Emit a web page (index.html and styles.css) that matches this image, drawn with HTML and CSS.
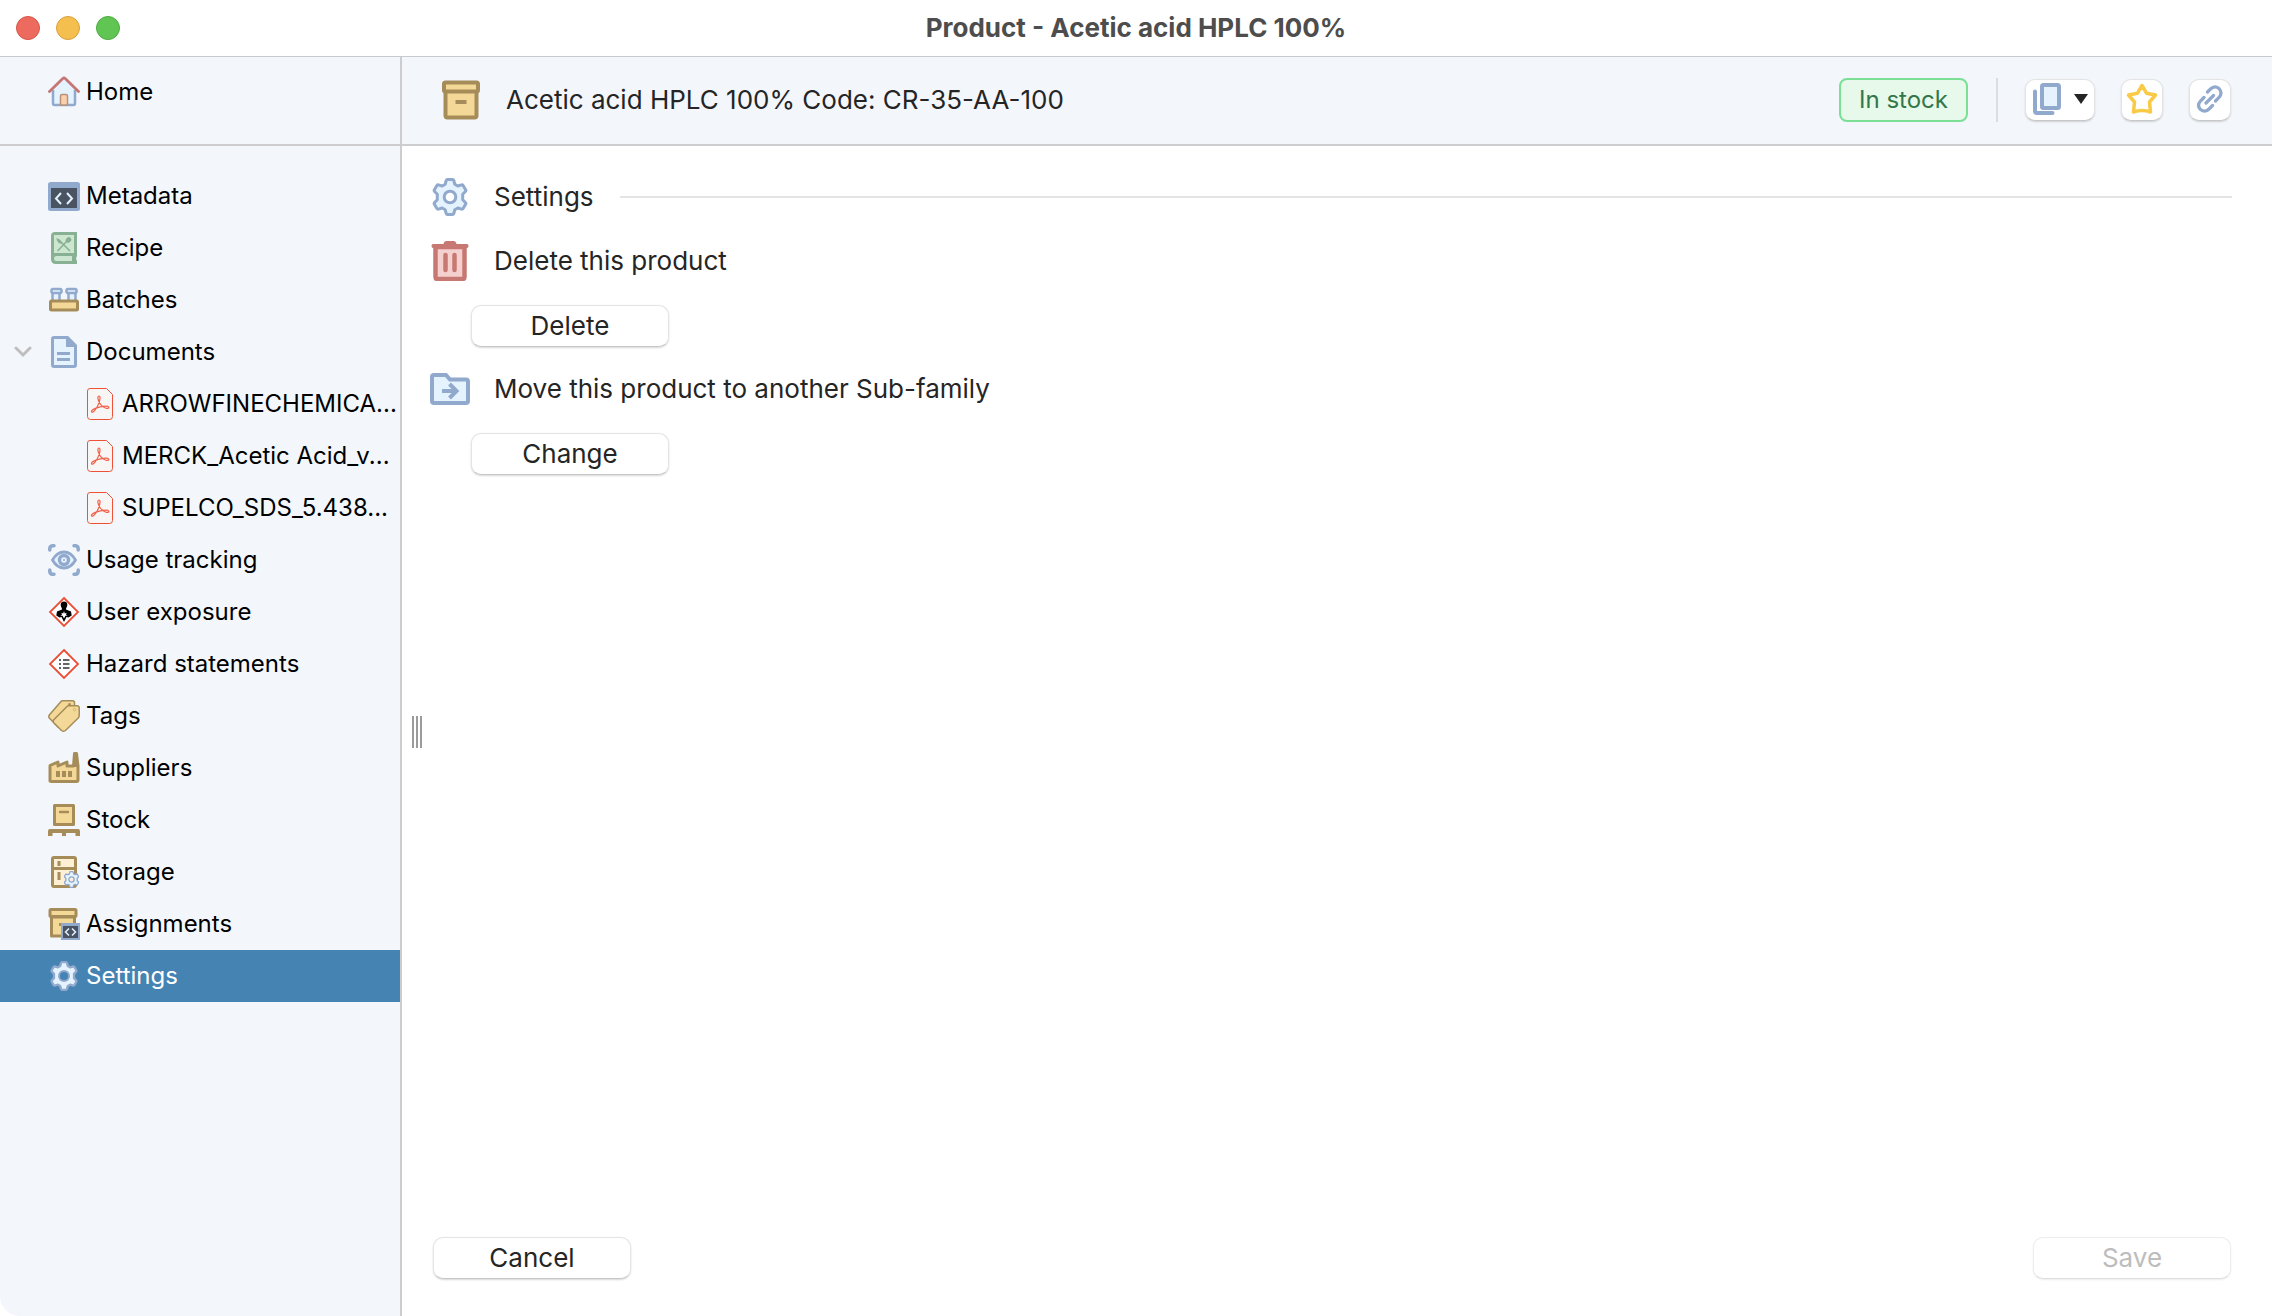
FILE: index.html
```html
<!DOCTYPE html>
<html lang="en">
<head>
  <meta charset="UTF-8">
  <meta name="viewport" content="width=device-width, initial-scale=1.0">
  <title>Product - Acetic acid HPLC 100%</title>
  <link rel="stylesheet" href="styles.css">
</head>
<body>

  <!-- icons used more than once -->
  <svg class="sprite" aria-hidden="true">
    <symbol id="pdf" viewBox="0 0 26 32">
      <path d="M3 .5h16.500l6 6V28.500a3 3 0 0 1-3 3H3.500a3 3 0 0 1-3-3V3A2.500 2.500 0 0 1 3 .5z" fill="#f8f6f5" stroke="#ee5138"/>
      <path d="M12 8c-1.500 0-1.300 2.500-.5 4.600 1.200 3.200 4 6.400 7.500 7.600 2 .6 3.200-.1 2.800-1-.6-1.200-4.300-1.200-8.300-.3-3.500.8-7.500 2.300-8.700 3.800-.8 1 .1 2 1.300 1.200 2.300-1.500 5.100-6.700 6.300-10.500C13.100 10.700 13.500 8 12 8z" fill="none" stroke="#f0604a" stroke-width="1.200"/>
    </symbol>
    <symbol id="gear" viewBox="0 0 36 38">
      <path d="M15.500 1.500h5q1 0 1.300 1l1 3.800 3 1.700 3.700-1.100q1-.3 1.600.6l2.500 4.200q.6 1-.2 1.800l-2.700 2.700v5.600l2.700 2.700q.8.800.2 1.800l-2.500 4.200q-.6.900-1.600.6L25.800 30l-3 1.700-1 3.800q-.3 1-1.300 1h-5q-1 0-1.300-1l-1-3.800-3-1.700-3.700 1.100q-1 .3-1.600-.6l-2.500-4.200q-.6-1 .2-1.800l2.700-2.700v-5.600l-2.700-2.700q-.8-.8-.2-1.800l2.500-4.200q.6-.9 1.600-.6L10.200 8l3-1.700 1-3.800q.3-1 1.300-1z M18 13.200a5.800 5.800 0 1 0 0 11.600a5.800 5.800 0 1 0 0-11.600z" fill="#e4f3fe" fill-rule="evenodd" stroke="#91a9cd" stroke-width="3" stroke-linejoin="round"/>
    </symbol>
  </svg>

  <header class="titlebar">
    <div class="lights">
      <span class="light red"></span>
      <span class="light yellow"></span>
      <span class="light green"></span>
    </div>
    <h1>Product - Acetic acid HPLC 100%</h1>
  </header>

  <div class="window">
    <nav class="sidebar">
      <div class="home">
        <a class="row" href="#">
          <svg class="icon" viewBox="0 0 32 32">
            <path d="M5 12L16 3l11 9v15a2 2 0 0 1-2 2H7a2 2 0 0 1-2-2z" fill="#e4f3fe"/>
            <path d="M5 14v13.500q0 1.500 1.500 1.500h19q1.500 0 1.500-1.500V14" fill="none" stroke="#91a9cd" stroke-width="2.500"/>
            <path d="M12.500 29V20q0-1.500 1.500-1.500h4q1.500 0 1.500 1.500v9z" fill="#fbd0ad" stroke="#b69279" stroke-width="1.500"/>
            <path d="M1.500 15.500L14.500 2.700q1.500-1.300 3 0l13 12.800" fill="none" stroke="#c47774" stroke-width="2.800" stroke-linecap="round"/>
          </svg>
          <span>Home</span>
        </a>
      </div>

      <div class="menu">
        <a class="row" href="#">
          <svg class="icon" viewBox="0 0 32 32">
            <rect y="2" width="32" height="29" rx="2.500" fill="#91a9cd"/>
            <rect x="3" y="8" width="26" height="20" fill="#4a5361"/>
            <path d="M13 13l-5 5.500 5 5.500M19 13l5 5.500-5 5.500" fill="none" stroke="#e4f3fe" stroke-width="2"/>
          </svg>
          <span>Metadata</span>
        </a>
        <a class="row" href="#">
          <svg class="icon" viewBox="0 0 32 32">
            <path d="M7 0h22v24q-1.600 2.500 0 5v3H8q-5 0-5-5V4q0-4 4-4z" fill="#88b093"/>
            <path d="M6 3h20v18H6zM8.500 24H24v5H8.500q-2.500 0-2.500-2.500T8.500 24z" fill="#cde6cf"/>
            <path d="M9.500 19L20 8M22 19L11 8" stroke="#88b093" stroke-width="1.500"/>
            <ellipse cx="20.500" cy="8" rx="3" ry="2.500" transform="rotate(-45 20.500 8)" fill="#88b093"/>
            <path d="M8.500 6q5 1.500 5 6-5-1-5-6z" fill="#88b093"/>
          </svg>
          <span>Recipe</span>
        </a>
        <a class="row" href="#">
          <svg class="icon" viewBox="0 0 32 32">
            <path d="M4.500 8.500h7V19h-7zM20.500 8.500h7V19h-7z" fill="#e4f3fe" stroke="#91a9cd" stroke-width="2.500"/>
            <rect x="3.500" y="5" width="10" height="4" rx="1.500" fill="#e4f3fe" stroke="#91a9cd" stroke-width="2.500"/>
            <rect x="18.500" y="5" width="10" height="4" rx="1.500" fill="#e4f3fe" stroke="#91a9cd" stroke-width="2.500"/>
            <rect x="2.500" y="17" width="27" height="9" rx="1" fill="#f4d898" stroke="#a58c58" stroke-width="3"/>
          </svg>
          <span>Batches</span>
        </a>
        <a class="row" href="#">
          <svg class="chevron" viewBox="0 0 18 12"><path d="M2 2l7 7 7-7" fill="none" stroke="#bebebe" stroke-width="3" stroke-linecap="round"/></svg>
          <svg class="icon" viewBox="0 0 32 32">
            <path d="M6 1.500h13.500l8 8V29q0 1.500-1.500 1.500H6q-1.500 0-1.500-1.500V3q0-1.500 1.500-1.500z" fill="#e4f3fe" stroke="#91a9cd" stroke-width="3"/>
            <path d="M18 2h3l7 7v2H18zM9 16h13v3H9zM9 22h13v3H9z" fill="#91a9cd"/>
          </svg>
          <span>Documents</span>
        </a>
        <a class="row file" href="#">
          <svg class="pdf"><use href="#pdf"/></svg>
          <span>ARROWFINECHEMICA...</span>
        </a>
        <a class="row file" href="#">
          <svg class="pdf"><use href="#pdf"/></svg>
          <span>MERCK_Acetic Acid_v...</span>
        </a>
        <a class="row file" href="#">
          <svg class="pdf"><use href="#pdf"/></svg>
          <span>SUPELCO_SDS_5.438...</span>
        </a>
        <a class="row" href="#">
          <svg class="icon" viewBox="0 0 32 32">
            <path d="M1.800 6V4.500Q2 2 4.500 1.800H6M26 1.800h1.500q2.500.2 2.700 2.700V6M30.200 26v1.500q-.2 2.500-2.700 2.700H26M6 30.200H4.500Q2 30 1.800 27.500V26" fill="none" stroke="#91a9cd" stroke-width="3.500" stroke-linecap="round"/>
            <path d="M4.500 16Q9 8 16 8t11.500 8Q23 24 16 24T4.500 16z" fill="#e4f3fe" stroke="#91a9cd" stroke-width="2.800"/>
            <circle cx="16" cy="16" r="4.500" fill="#e4f3fe" stroke="#91a9cd" stroke-width="3.400"/>
            <circle cx="16" cy="16" r="1" fill="#91a9cd"/>
          </svg>
          <span>Usage tracking</span>
        </a>
        <a class="row" href="#">
          <svg class="icon" viewBox="0 0 32 32">
            <path d="M16 2l14 14-14 14L2 16z" fill="#fff" stroke="#ea4f37" stroke-width="1.800"/>
            <path d="M16 5.500a3.300 3.300 0 0 1 3.300 3.500c0 2-1.300 2.800-1.300 4.500l5 2 .7 4-3.200 2-2-.5-2.500 5-2.500-5-2 .5-3.200-2 .7-4 5-2c0-1.700-1.300-2.500-1.300-4.500A3.300 3.300 0 0 1 16 5.500z"/>
            <path d="M16 15l.8 2.400 2-.7-.9 1.800 1.700 1-2.200.3L16 22.500l-1.400-2.700-2.200-.3 1.700-1-.9-1.800 2 .7z" fill="#fff"/>
          </svg>
          <span>User exposure</span>
        </a>
        <a class="row" href="#">
          <svg class="icon" viewBox="0 0 32 32">
            <path d="M16 2l14 14-14 14L2 16z" fill="#fff" stroke="#ea4f37" stroke-width="1.800"/>
            <path d="M11 12h2M15 12h6.500M11 16h2M15 16h6.500M11 20h2M15 20h6.500" stroke="#333" stroke-width="1.500"/>
          </svg>
          <span>Hazard statements</span>
        </a>
        <a class="row" href="#">
          <svg class="icon" viewBox="0 0 32 32">
            <path d="M14.500.8h10q2 0 2 2V10L10 27 1.300 18q-1-1.500 0-3L13 1.500q.5-.7 1.500-.7z" fill="#f4d898" stroke="#a58c58" stroke-width="1.500"/>
            <path d="M20.500 5.800h8.500q2.200 0 2.200 2.200v7.500q0 1.500-1 2.500L17.500 30.500q-2 1.500-4 0L6 23q-1.500-2 0-3.500L19 6.500q.7-.7 1.500-.7z" fill="#f4d898" stroke="#a58c58" stroke-width="1.500"/>
            <circle cx="21.500" cy="4.200" r="1.300" fill="#a58c58"/>
            <circle cx="26.500" cy="9.500" r="1.300" fill="none" stroke="#d5b878"/>
          </svg>
          <span>Tags</span>
        </a>
        <a class="row" href="#">
          <svg class="icon" viewBox="0 0 32 32">
            <path d="M2 29V13.500L10 10v4l9-4v4h6.500L26.500 1.500h2L30 14v14q0 1.500-1.500 1.500h-25Q2 29.500 2 28z" fill="#f4d898" stroke="#a58c58" stroke-width="3" stroke-linejoin="round"/>
            <path d="M26 1h3l1.500 14H25zM8 19h4v6H8zM14 19h4v6h-4zM20 19h4v6h-4z" fill="#a58c58"/>
          </svg>
          <span>Suppliers</span>
        </a>
        <a class="row" href="#">
          <svg class="icon" viewBox="0 0 32 32">
            <rect x="6.500" y="1.500" width="19" height="19" fill="#f4d898" stroke="#a58c58" stroke-width="3" stroke-linejoin="round"/>
            <path d="M12 8h8" stroke="#a58c58" stroke-width="2.500" stroke-linecap="round"/>
            <path d="M2 25h28q2 0 2 2v5h-4.500v-3H18v3h-4v-3H4.500v3H0v-5q0-2 2-2z" fill="#a58c58"/>
          </svg>
          <span>Stock</span>
        </a>
        <a class="row" href="#">
          <svg class="icon" viewBox="0 0 32 32">
            <rect x="4.500" y="1.500" width="23" height="29" rx="1.500" fill="#fdf0d5" stroke="#a58c58" stroke-width="3"/>
            <path d="M4 11h24v3H4zM9.500 5h3v5h-3zM9.500 16h3v8h-3z" fill="#a58c58"/>
            <svg x="15" y="15" width="17" height="17" viewBox="0 0 36 38"><use href="#gear"/></svg>
          </svg>
          <span>Storage</span>
        </a>
        <a class="row" href="#">
          <svg class="icon" viewBox="0 0 32 32">
            <path d="M3.500 9h23v19h-23z" fill="#f4d898" stroke="#a58c58" stroke-width="3" stroke-linejoin="round"/>
            <rect x="2" y="1.500" width="26" height="7" rx="1" fill="#f4d898" stroke="#a58c58" stroke-width="3"/>
            <path d="M11 15h6v3h-6z" fill="#a58c58"/>
            <path d="M13 15h19v17H13z" fill="#91a9cd"/>
            <path d="M15 18h15v12H15z" fill="#4a5361"/>
            <path d="M21 20.500L17.500 24l3.500 3.500M24 20.500l3.500 3.500-3.500 3.500" fill="none" stroke="#e4f3fe" stroke-width="1.500"/>
          </svg>
          <span>Assignments</span>
        </a>
        <a class="row active" href="#">
          <svg class="icon" viewBox="0 0 32 32">
            <svg x="1" y="1" width="30" height="30" viewBox="0 0 36 38"><use href="#gear"/></svg>
            <circle cx="16" cy="16" r="8" fill="#e4f3fe"/>
            <circle cx="16" cy="16" r="5" fill="#4583b3" stroke="#91a9cd" stroke-width="2"/>
          </svg>
          <span>Settings</span>
        </a>
      </div>
    </nav>

    <main>
      <div class="toolbar">
        <svg class="box" viewBox="0 0 40 40">
          <path d="M4.500 11h31v24.500q0 2-2 2h-27q-2 0-2-2z" fill="#f4d898" stroke="#a58c58" stroke-width="4"/>
          <rect x="3" y="2.500" width="34" height="9" rx="1.500" fill="#f4d898" stroke="#a58c58" stroke-width="4"/>
          <path d="M14.500 20h11v4h-11z" fill="#a58c58"/>
        </svg>
        <h2>Acetic acid HPLC 100% Code: CR-35-AA-100</h2>
        <span class="badge">In stock</span>
        <span class="divider"></span>
        <button class="tool wide" type="button" aria-label="Copy">
          <svg width="28" height="34" viewBox="0 0 28 34">
            <rect x="9" y="3" width="17" height="23" rx="1.500" fill="#e4f3fe" stroke="#91a9cd" stroke-width="4"/>
            <path d="M2 9.500V29q0 2 2 2h15.500" fill="none" stroke="#91a9cd" stroke-width="4" stroke-linecap="round"/>
          </svg>
          <svg width="14" height="10" viewBox="0 0 14 10"><path d="M0 0h14L7 10z" fill="#252525"/></svg>
        </button>
        <button class="tool" type="button" aria-label="Favorite">
          <svg width="32" height="32" viewBox="0 0 32 32">
            <path d="M16 2.500l4.500 7.700 9 1.800-6 7 1 10q-8.500-3-17 0l1-10-6-7 9-1.800z" fill="none" stroke="#f8ca45" stroke-width="3.500" stroke-linejoin="round"/>
          </svg>
        </button>
        <button class="tool" type="button" aria-label="Link">
          <svg width="28" height="28" viewBox="0 0 28 28">
            <path d="M11.500 7l3-3q4-4 8.500-.5 4 4.500 0 9l-3.500 3.500M8 12.500L4.500 16q-4 4.500 0 8.500 4.500 3.500 8.500-.5l3.500-3.500M10 18l7.500-7.500" fill="none" stroke="#91a9cd" stroke-width="3.200" stroke-linecap="round"/>
          </svg>
        </button>
      </div>

      <div class="content">
        <div class="splitter"><i></i><i></i><i></i></div>

        <section class="settings">
          <div class="heading">
            <svg class="big-icon" viewBox="0 0 40 40"><use href="#gear" x="2" width="36" height="40"/></svg>
            <h3>Settings</h3>
            <hr>
          </div>

          <div class="heading">
            <svg class="big-icon" viewBox="0 0 40 40">
              <path d="M5.500 6h29v30q0 2-2 2h-25q-2 0-2-2z" fill="#f4d1cf" stroke="#c77872" stroke-width="4.500"/>
              <path d="M3 3h10.500q.5-3 3-3h7q2.500 0 3 3H37q1.500 0 1.500 2t-1.500 2H3Q1.500 7 1.500 5T3 3z" fill="#c77872"/>
              <path d="M15.500 14v15M24.500 14v15" stroke="#c77872" stroke-width="4.500" stroke-linecap="round"/>
            </svg>
            <h3>Delete this product</h3>
          </div>
          <button class="btn action" type="button">Delete</button>

          <div class="heading">
            <svg class="big-icon" viewBox="0 0 40 40">
              <path d="M4 6h12l4 4.500h16q2 0 2 2V32q0 2-2 2H4q-2 0-2-2V8q0-2 2-2z" fill="#e4f3fe" stroke="#91a9cd" stroke-width="4"/>
              <path d="M12 22h14M19.500 15l7 7-7 7" fill="none" stroke="#91a9cd" stroke-width="4"/>
            </svg>
            <h3>Move this product to another Sub-family</h3>
          </div>
          <button class="btn action" type="button">Change</button>

          <div class="footer">
            <button class="btn" type="button">Cancel</button>
            <button class="btn" type="button" disabled>Save</button>
          </div>
        </section>
      </div>
    </main>
  </div>

</body>
</html>
```
FILE: styles.css
```css
* {
  box-sizing: border-box;
}

body {
  display: flex;
  flex-direction: column;
  height: 100vh;
  margin: 0;
  overflow: hidden;
  background-color: #fff;
  color: #252525;
  font-family: Inter, "Liberation Sans", sans-serif;
  font-size: 26px;
}

h1, h2, h3 {
  margin: 0;
  font-size: 26px;
  font-weight: 400;
}

svg {
  display: block;
  flex-shrink: 0;
}

.sprite {
  position: absolute;
  width: 0;
  height: 0;
}

/* title bar */
.titlebar {
  display: grid;
  grid-template-columns: 1fr auto 1fr;
  align-items: center;
  height: 57px;
  flex-shrink: 0;
  border-bottom: 1px solid #c9cccf;
}

.titlebar h1 {
  padding-bottom: 2px;
  color: #4d4d4d;
  font-weight: 700;
  font-optical-sizing: none;
}

.lights {
  display: flex;
  gap: 16px;
  padding-left: 16px;
}

.light {
  width: 24px;
  height: 24px;
  border-radius: 50%;
}

.red {
  background-color: #ed6a5e;
  border: 1px solid #d65549;
}

.yellow {
  background-color: #f5bf4f;
  border: 1px solid #d8a13c;
}

.green {
  background-color: #61c554;
  border: 1px solid #4eab40;
}

.window {
  display: flex;
  flex: 1;
  min-height: 0;
}

/* sidebar */
.sidebar {
  width: 402px;
  flex-shrink: 0;
  background-color: #f3f7fc;
  border-right: 2px solid #cdcdcf;
  border-bottom-left-radius: 20px;
}

.home {
  height: 89px;
  padding-top: 9px;
  border-bottom: 2px solid #cdcdcf;
}

.menu {
  padding-top: 24px;
}

.row {
  position: relative;
  display: flex;
  align-items: center;
  gap: 6px;
  height: 52px;
  padding-left: 48px;
  color: #000;
  font-size: 24px;
  text-decoration: none;
  white-space: nowrap;
}

.row span {
  padding-bottom: 2px;
}

.row.file {
  gap: 9px;
  padding-left: 87px;
}

.row.active {
  background-color: #4583b3;
  color: #fff;
}

.icon {
  width: 32px;
  height: 32px;
}

.pdf {
  width: 26px;
  height: 32px;
}

.chevron {
  position: absolute;
  left: 14px;
  width: 18px;
  height: 12px;
}

/* main area */
main {
  display: flex;
  flex: 1;
  flex-direction: column;
  min-width: 0;
}

.toolbar {
  display: flex;
  align-items: center;
  height: 89px;
  flex-shrink: 0;
  padding: 0 41px 2px 39px;
  background-color: #f3f7fc;
  border-bottom: 2px solid #cdcdcf;
}

.toolbar h2 {
  flex: 1;
  padding-left: 25px;
}

.box {
  width: 40px;
  height: 40px;
}

.badge {
  padding: 0 18px;
  background-color: #e6f9ea;
  border: 2px solid #7bdf94;
  border-radius: 8px;
  color: #33764a;
  font-size: 24px;
  line-height: 40px;
}

.divider {
  width: 2px;
  height: 44px;
  margin: 0 27px 0 28px;
  background-color: #dadee2;
}

.tool,
.btn {
  display: flex;
  align-items: center;
  justify-content: center;
  height: 42px;
  padding: 0 0 1px;
  background-color: #fff;
  border: 1px solid #e4e4e5;
  border-bottom-color: #c8c8c8;
  border-radius: 10px;
  box-shadow: 0 1px 2px rgba(0, 0, 0, 0.16);
  color: #252525;
  font: inherit;
}

.tool {
  width: 42px;
  margin-left: 26px;
}

.tool.wide {
  width: 70px;
  gap: 13px;
  margin-left: 0;
}

.btn {
  width: 198px;
}

.btn:disabled {
  border-color: #ededed;
  border-bottom-color: #dedede;
  box-shadow: 0 1px 2px rgba(0, 0, 0, 0.08);
  color: #bdbdbd;
}

.content {
  display: flex;
  flex: 1;
  min-height: 0;
}

.splitter {
  display: flex;
  align-items: center;
  gap: 2px;
  padding: 2px 8px 0 10px;
}

.splitter i {
  width: 2px;
  height: 32px;
  background-color: #9b9b9b;
}

.settings {
  display: flex;
  flex: 1;
  flex-direction: column;
  padding: 19px 40px 37px 0;
}

.heading {
  display: flex;
  align-items: center;
  height: 64px;
}

.heading h3 {
  padding: 0 0 2px 24px;
}

.heading hr {
  flex: 1;
  height: 2px;
  margin: 0 0 0 26px;
  background-color: #e4e4e4;
  border: none;
}

.big-icon {
  width: 40px;
  height: 40px;
}

.action {
  margin: 12px 0 10px 41px;
}

.footer {
  display: flex;
  justify-content: space-between;
  margin-top: auto;
  padding: 0 1px 0 3px;
}
```
